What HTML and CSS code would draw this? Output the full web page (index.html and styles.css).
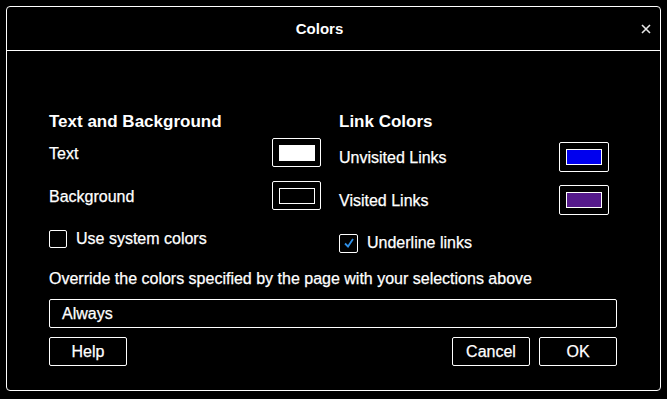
FILE: index.html
```html
<!DOCTYPE html>
<html lang="en">
<head>
    <meta charset="UTF-8">
    <meta name="viewport" content="width=device-width, initial-scale=1.0">
    <title>Colors</title>
    <link rel="stylesheet" href="styles.css">
</head>
<body>
    <div class="dialog">
        <div class="header">
            <h1>Colors</h1>
            <button class="close" title="Close">
                <svg width="10" height="10" viewBox="0 0 10 10">
                    <path d="M1 1 L9 9 M9 1 L1 9" stroke="#e6e6e6" stroke-width="1.6" fill="none"/>
                </svg>
            </button>
        </div>

        <div class="content">
            <div class="columns">
                <div class="column">
                    <h2>Text and Background</h2>
                    <div class="row">
                        <span class="label">Text</span>
                        <button class="swatch"><span class="chip chip-text"></span></button>
                    </div>
                    <div class="row">
                        <span class="label">Background</span>
                        <button class="swatch"><span class="chip chip-bg"></span></button>
                    </div>
                    <label class="row check">
                        <span class="box"></span>
                        <span class="label">Use system colors</span>
                    </label>
                </div>

                <div class="column right">
                    <h2>Link Colors</h2>
                    <div class="rows">
                        <div class="row">
                            <span class="label">Unvisited Links</span>
                            <button class="swatch"><span class="chip chip-unvisited"></span></button>
                        </div>
                        <div class="row">
                            <span class="label">Visited Links</span>
                            <button class="swatch"><span class="chip chip-visited"></span></button>
                        </div>
                        <label class="row check">
                            <span class="box">
                                <svg width="14" height="14" viewBox="0 0 14 14">
                                    <path d="M3 7.5 L6 10.5 L11 3" stroke="#2f8fe6" stroke-width="1.8" fill="none"/>
                                </svg>
                            </span>
                            <span class="label">Underline links</span>
                        </label>
                    </div>
                </div>
            </div>

            <p class="override">Override the colors specified by the page with your selections above</p>
            <div class="select">Always</div>

            <div class="actions">
                <button class="btn">Help</button>
                <div class="spacer"></div>
                <button class="btn">Cancel</button>
                <button class="btn">OK</button>
            </div>
        </div>
    </div>
</body>
</html>
```

FILE: styles.css
```css
body {
    margin: 0;
    background-color: #000;
    color: #fff;
    font-family: "Liberation Sans", Arial, sans-serif;
    font-size: 16px;
    -webkit-text-stroke: 0.25px #fff;
}
.dialog {
    margin: 6px;
    width: 653px;
    height: 383px;
    border: 1px solid #fff;
    border-radius: 4px;
    display: flex;
    flex-direction: column;
}
.header {
    height: 43px;
    border-bottom: 1px solid #fff;
    display: flex;
    align-items: center;
    justify-content: center;
    padding-right: 28px;
    position: relative;
}
.header h1 {
    margin: 0;
    font-size: 15px;
    font-weight: bold;
    -webkit-text-stroke: 0;
}
.close {
    position: absolute;
    right: 9px;
    top: 17px;
    background: none;
    border: none;
    padding: 0;
    width: 10px;
    height: 10px;
    display: flex;
}
.content {
    padding: 61px 43px 0 42px;
}
.columns {
    display: grid;
    grid-template-columns: 272px 270px;
    column-gap: 18px;
}
.column h2 {
    margin: 0 0 6px 0;
    font-size: 17px;
    line-height: 20px;
    font-weight: bold;
    -webkit-text-stroke: 0;
}
.row {
    height: 29px;
    display: flex;
    align-items: center;
    justify-content: space-between;
    margin-bottom: 14px;
}
.row .label {
    padding-top: 3px;
}
.rows .row .label {
    padding-top: 2px;
}
.row.check .label {
    padding-top: 0;
}
.rows {
    padding-top: 4px;
}
.rows .row {
    height: 30px;
    margin-bottom: 13px;
}
.row.check {
    justify-content: flex-start;
    gap: 9px;
    margin-bottom: 0;
}
.box {
    width: 18px;
    height: 18px;
    border: 1px solid #fff;
    border-radius: 2px;
    box-sizing: border-box;
    display: flex;
    align-items: center;
    justify-content: center;
}
.rows .box {
    width: 19px;
    height: 19px;
}
.swatch {
    width: 49px;
    height: 29px;
    border: 1px solid #fff;
    border-radius: 2px;
    background: #000;
    padding: 0;
    display: flex;
    align-items: center;
    justify-content: center;
}
.rows .swatch {
    width: 50px;
    height: 30px;
}
.chip {
    width: 36px;
    height: 16px;
    box-sizing: border-box;
}
.chip-text {
    background-color: #fff;
}
.chip-bg {
    background-color: #000;
    border: 1px solid #fff;
}
.chip-unvisited {
    background-color: #0000ee;
    border: 1px solid #fff;
}
.chip-visited {
    background-color: #551a8b;
    border: 1px solid #fff;
}
.override {
    margin: 12px 0 11px 0;
    line-height: 18px;
}
.select {
    height: 27px;
    border: 1px solid #fff;
    border-radius: 2px;
    padding-left: 12px;
    display: flex;
    align-items: center;
}
.actions {
    display: flex;
    gap: 9px;
    margin-top: 9px;
}
.spacer {
    flex: 1;
}
.btn {
    width: 78px;
    height: 29px;
    background: #000;
    color: #fff;
    border: 1px solid #fff;
    border-radius: 2px;
    font-family: "Liberation Sans", Arial, sans-serif;
    font-size: 16px;
    -webkit-text-stroke: 0.25px #fff;
    padding: 0;
}
```
